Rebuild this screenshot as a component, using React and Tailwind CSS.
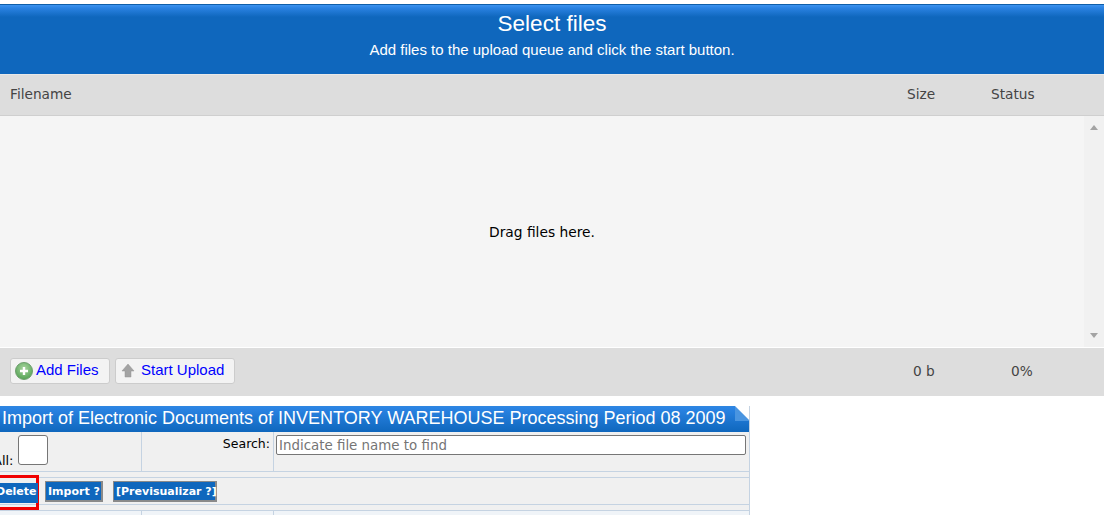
const sans = "font-['Liberation_Sans',Arial,sans-serif]";
const dejavu = "font-['DejaVu_Sans',Verdana,sans-serif]";

function PlusIcon() {
    return (
        <svg width="18" height="18" viewBox="0 0 18 18" className="shrink-0">
            <defs>
                <radialGradient id="plusFill" cx="50%" cy="35%" r="70%">
                    <stop offset="0%" stopColor="#a9d6a0" />
                    <stop offset="100%" stopColor="#4f9f4f" />
                </radialGradient>
            </defs>
            <circle cx="9" cy="9" r="8.5" fill="url(#plusFill)" stroke="#6f9f6f" />
            <path d="M9 5v8M5 9h8" stroke="#fff" strokeWidth="2.4" />
        </svg>
    );
}

function UpIcon() {
    return (
        <svg width="14" height="15" viewBox="0 0 14 15" className="shrink-0">
            <path d="M7 1l6 7H10v6H4V8H1z" fill="#a3a3a3" stroke="#949494" strokeWidth="0.5" />
        </svg>
    );
}

function FooterButton({ icon, label, className }) {
    return (
        <button className={`h-[26px] flex items-center rounded-[3px] border border-[#cccccc] bg-[#f3f3f3] pb-[1px] text-[15px] text-[#0000ff] ${className}`}>
            {icon}
            {label}
        </button>
    );
}

function ActionButton({ label, className }) {
    return (
        <span className={`h-[21px] flex items-center whitespace-nowrap border border-r-2 border-b-2 border-[#8a8a8a] bg-[#0f67bd] pt-[3px] text-[11px] font-bold text-white ${dejavu} ${className}`}>
            {label}
        </span>
    );
}

export default function App() {
    return (
        <div className={`w-[1104px] h-[515px] overflow-hidden bg-white pt-1 ${sans}`}>
            <header className="h-[70px] flex flex-col items-center border-t border-[#0f5ea8] bg-[linear-gradient(#3d93ef_0px,#2a82e2_3px,#0f67bd_12px,#0f67bd_100%)] text-white">
                <h1 className="mt-[5px] text-[22.5px] leading-[28px]">Select files</h1>
                <p className="mt-[2px] text-[15px] leading-[20px]">Add files to the upload queue and click the start button.</p>
            </header>

            <div className={`h-[42px] flex items-center border-t border-b border-t-[#e8e8e8] border-b-[#cfcfcf] bg-[#dddddd] pb-[2px] text-[13.7px] text-[#444444] ${dejavu}`}>
                <span className="ml-[10px] flex-1">Filename</span>
                <span className="w-[84px]">Size</span>
                <span className="w-[113px]">Status</span>
            </div>

            <div className="h-[231px] flex bg-[#f5f5f5]">
                <div className={`flex-1 flex items-center justify-center pt-[2px] text-[13.8px] text-black ${dejavu}`}>
                    Drag files here.
                </div>
                <div className="w-5 flex flex-col items-center justify-between bg-[#f1f1f1] py-[9px]">
                    <span className="w-0 h-0 border-x-[4.5px] border-x-transparent border-b-[5px] border-b-[#a3a3a3]" />
                    <span className="w-0 h-0 border-x-[4.5px] border-x-transparent border-t-[5px] border-t-[#a3a3a3]" />
                </div>
            </div>

            <div className="h-[49px] flex items-center border-t border-white bg-[#dddddd] pb-[2px]">
                <div className="flex-1 flex items-center gap-[5px] pl-[10px]">
                    <FooterButton icon={<PlusIcon />} label="Add Files" className="w-[100px] pl-1 gap-[3px]" />
                    <FooterButton icon={<UpIcon />} label="Start Upload" className="w-[120px] pl-[5px] gap-[6px]" />
                </div>
                <span className={`w-[98px] text-[13.7px] text-[#444444] ${dejavu}`}>0 b</span>
                <span className={`w-[93px] text-[13.7px] text-[#444444] ${dejavu}`}>0%</span>
            </div>

            <section className="mt-[10px] w-[750px] h-[109px] overflow-hidden border-r border-[#c5d3e2] bg-[#f0f0f0]">
                <div className="relative -mr-px h-[26px] flex items-center border-t border-[#2f86e0] bg-[linear-gradient(#2c85e5,#0f67bd)] pl-[2px] pb-[2px] text-[18px] text-white">
                    Import of Electronic Documents of INVENTORY WAREHOUSE Processing Period 08 2009
                    <svg width="15" height="15" viewBox="0 0 15 15" className="absolute right-0 -top-px">
                        <path d="M0 0L15 15H0z" fill="#4a95e0" />
                        <path d="M0 0H15V15z" fill="#ffffff" />
                    </svg>
                </div>

                <div className={`h-[40px] flex border-b border-[#c5d3e2] text-black ${dejavu}`}>
                    <div className="w-[142px] flex items-end border-r border-[#c5d3e2]">
                        <span className="-ml-[7px] mb-[4px] mr-[4px] text-[13px] leading-none">All:</span>
                        <span className="mb-[6px] block w-[30px] h-[30px] rounded-[3px] border border-[#767676] bg-white" />
                    </div>
                    <div className="w-[132px] flex justify-end border-r border-[#c5d3e2] pt-[3px] pr-[3px] text-[12.5px]">
                        Search:
                    </div>
                    <div className="flex-1 pt-[3px] pl-[2px] pr-[3px]">
                        <div className="h-[20px] flex items-center rounded-[2px] border border-[#767676] bg-white px-[2px] pt-[2px] text-[13.4px] text-[#757575]">
                            Indicate file name to find
                        </div>
                    </div>
                </div>

                <div className="relative mt-[5px] h-[28px] flex items-center gap-[10px] border-t border-b border-[#c5d3e2] pl-[45px]">
                    <ActionButton label="Import ?" className="w-[58px] pl-[2px]" />
                    <ActionButton label="[Previsualizar ?]" className="w-[104px] pl-[2px]" />
                    <div className={`absolute -left-[12px] -top-[3px] w-[51px] h-[35px] flex items-center border-[3px] border-[#f00000] text-[11px] font-bold ${dejavu}`}>
                        <span className="h-[20px] flex items-center bg-[#0f67bd] pl-[5px] pr-[1px] text-white">Delete</span>
                    </div>
                </div>

                <div className="mt-[5px] h-[6px] flex border-t border-[#c5d3e2] bg-[#f0f4f8]">
                    <div className="w-[142px] border-r border-[#c5d3e2]" />
                    <div className="w-[132px] border-r border-[#c5d3e2]" />
                </div>
            </section>
        </div>
    );
}
